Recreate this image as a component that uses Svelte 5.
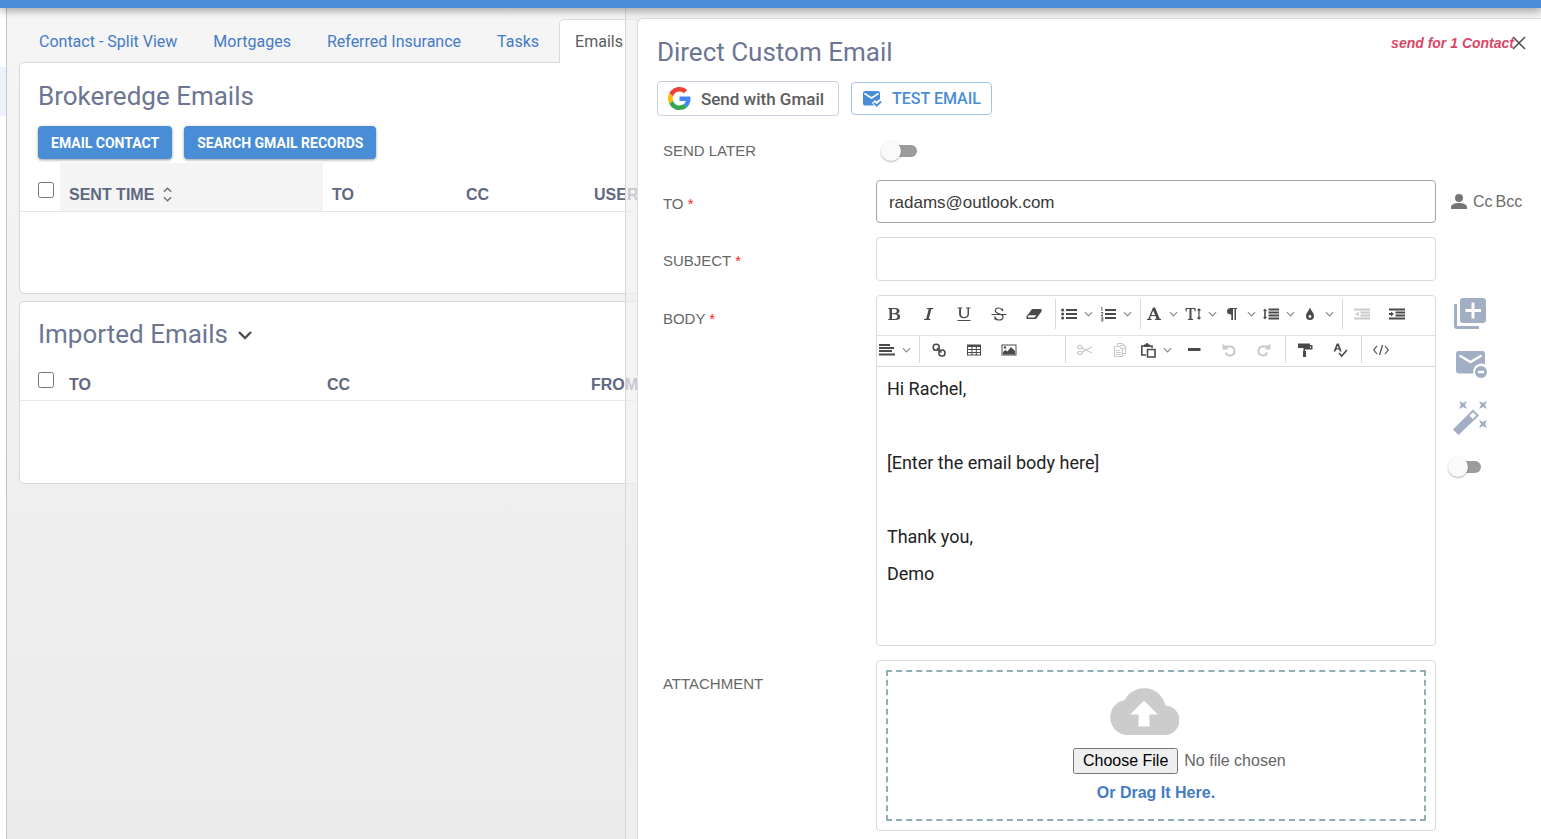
<script lang="ts">
	interface Tool {
		name: string;
		icon: string;
		split?: boolean;
		disabled?: boolean;
	}

	let tabs = ['Contact - Split View', 'Mortgages', 'Referred Insurance', 'Tasks', 'Emails'];
	let activeTab = $state('Emails');

	let sendLater = $state(false);
	let useTemplate = $state(false);
	let to = $state('radams@outlook.com');
	let subject = $state('');

	// toolbar rows, each one split into groups
	const toolbar: Tool[][][] = [
		[
			[
				{ name: 'Bold', icon: 'bold' },
				{ name: 'Italic', icon: 'italic' },
				{ name: 'Underline', icon: 'underline' },
				{ name: 'Strikethrough', icon: 'strike' },
				{ name: 'Clear formatting', icon: 'eraser' }
			],
			[
				{ name: 'Bulleted list', icon: 'ul', split: true },
				{ name: 'Numbered list', icon: 'ol', split: true }
			],
			[
				{ name: 'Font', icon: 'font', split: true },
				{ name: 'Font size', icon: 'size', split: true },
				{ name: 'Paragraph', icon: 'paragraph', split: true },
				{ name: 'Line height', icon: 'lineheight', split: true },
				{ name: 'Color', icon: 'drop', split: true }
			],
			[
				{ name: 'Outdent', icon: 'outdent', disabled: true },
				{ name: 'Indent', icon: 'indent' }
			]
		],
		[
			[{ name: 'Align', icon: 'align', split: true }],
			[
				{ name: 'Link', icon: 'link' },
				{ name: 'Table', icon: 'table' },
				{ name: 'Image', icon: 'image' }
			],
			[
				{ name: 'Cut', icon: 'cut', disabled: true },
				{ name: 'Copy', icon: 'copy', disabled: true },
				{ name: 'Paste', icon: 'paste', split: true },
				{ name: 'Horizontal line', icon: 'hr' },
				{ name: 'Undo', icon: 'undo', disabled: true },
				{ name: 'Redo', icon: 'redo', disabled: true }
			],
			[
				{ name: 'Format painter', icon: 'painter' },
				{ name: 'Spell check', icon: 'spell' }
			],
			[{ name: 'Source', icon: 'source' }]
		]
	];
</script>

{#snippet icon(name: string)}
	<svg class="tool-icon" viewBox="0 0 16 16" aria-hidden="true">
		{#if name === 'bold'}
			<path fill-rule="evenodd" d="M2 2h7c3 0 4.500 1 4.500 3 0 1.500-1 2.400-2.500 2.700 2 .3 3.200 1.400 3.200 3.100 0 2.200-1.700 3.200-4.700 3.200H2v-.8l1.500-.3V3.100L2 2.800zm4 1v4.200h2.200c1.800 0 2.600-.7 2.600-2.100S10 3 8.300 3zm0 5.200V13h2.600c1.900 0 2.800-.8 2.800-2.400s-1-2.400-3-2.400z" />
		{:else if name === 'italic'}
			<path d="M6 2h6.500l-.2.9-2 .3L7.800 12.800l1.700.3-.2.900H3l.2-.9 2-.3L7.700 3.200 5.800 2.900z" />
		{:else if name === 'underline'}
			<path d="M1.500 1.500h5v.8L5 2.600V8c0 2 1 3 3.200 3s3.300-1 3.300-3V2.600L9.900 2.300v-.8h4.600v.8l-1.500.3V8c0 2.700-1.700 4.200-5 4.200S3.100 10.700 3.100 8V2.600L1.500 2.300zM1.500 14h13v1h-13z" />
		{:else if name === 'strike'}
			<path d="M.5 8h15v1H.5z" />
			<path class="line" d="M11.500 5V2.500M11.300 4.500C10.500 2.700 9.500 2 7.800 2 5.500 2 4.300 3 4.300 4.700c0 3.600 7.700 2.400 7.700 6 0 2-1.500 3.300-4 3.300-2 0-3.300-.8-4-2.800m0-1v3.500" />
		{:else if name === 'eraser'}
			<path fill-rule="evenodd" d="M6 3h9.500v2.500L10 13H.5v-2.500zM2 10.500v1h6.500l1.800-2.300H3z" />
		{:else if name === 'ul'}
			<path d="M5 3h11v2H5zM5 7h11v2H5zM5 11h11v2H5z" /><circle cx="1.600" cy="4" r="1.500" /><circle cx="1.600" cy="8" r="1.500" /><circle cx="1.600" cy="12" r="1.500" />
		{:else if name === 'ol'}
			<path d="M5 3h11v2H5zM5 7h11v2H5zM5 11h11v2H5z" /><path class="thin" d="M1 1.500h1V5M.8 6.500h2v1.500L1 9.500h2M.8 11h2v4h-2m0-2h2" />
		{:else if name === 'font'}
			<path fill-rule="evenodd" d="M7 1.500h2l4.700 11.200 1.300.3v1H9v-1l1.500-.3-1-2.700H5l-1 2.700 1.600.3v1H1v-1l1.400-.3zM7.200 4.500L5.400 9h3.700z" />
		{:else if name === 'size'}
			<path d="M.5 2h10v3.500h-.8L9 3H6.500v9.800l1.500.3v.9H3v-.9l1.500-.3V3H2l-.7 2.500H.5z" /><path class="line" d="M14 3v10M12.500 4.500L14 3l1.500 1.500m-3 7L14 13l1.500-1.500" />
		{:else if name === 'paragraph'}
			<path d="M7 2h6v1h-1v11h-1.500V3H9v11H7.300V8.500C4.500 8.500 3 7.400 3 5.300S4.500 2 7 2z" />
		{:else if name === 'lineheight'}
			<path d="M5.500 2.500H16v2H5.500zM5.500 5.500H16v2H5.500zM5.500 8.500H16v2H5.500zM5.500 11.500H16v2H5.500zM2 2.500l2 2.500H2.800v6H4l-2 2.500L0 11h1.200V5H0z" />
		{:else if name === 'drop'}
			<path fill-rule="evenodd" d="M8 1.500c1 3 4 5.300 4 8.500a4 4 0 0 1-8 0c0-3.200 3-5.500 4-8.500zM8 9a1.400 1.400 0 1 0 1.400 1.400C9.400 9.600 8.700 9.500 8 9z" />
		{:else if name === 'outdent' || name === 'indent'}
			<path d="M0 2.500h16v2H0zM6.500 5.500H16v2H6.500zM6.500 8.500H16v2H6.500zM0 11.500h16v2H0z" />
			{#if name === 'indent'}<path d="M0 7h2V5.700L5 8l-3 2.300V9H0z" />{:else}<path d="M4.800 5.700v4.600L1 8z" />{/if}
		{:else if name === 'align'}
			<path d="M0 2h11v2H0zM0 5h15v2H0zM0 8h13v2H0zM0 11.500h16v2H0z" />
		{:else if name === 'link'}
			<g class="bold-line"><rect x="2.200" y="2.200" width="6" height="6" rx="2.800" /><rect x="8" y="8" width="6" height="6" rx="2.800" /><path d="M6 6l4.500 4.500" /></g>
		{:else if name === 'table'}
			<path fill-rule="evenodd" d="M1 2.500h14v11H1zM2 5v2h3.500V5zm4.500 0v2h3.300V5zm4.300 0v2H14V5zM2 8v2h3.500V8zm4.500 0v2h3.300V8zm4.300 0v2H14V8zM2 11v1.500h3.500V11zm4.500 0v1.500h3.300V11zm4.300 0v1.500H14V11z" />
		{:else if name === 'image'}
			<path fill-rule="evenodd" d="M.5 2.500h15v11H.5zm1 1v9h13v-9z" /><path d="M2 12.500V10l2.500-2 2 1.500L10 5l4 4v3.500z" /><circle cx="4" cy="5.500" r="1.200" />
		{:else if name === 'cut'}
			<path class="line" d="M5 6l10 5M5 10l10-5" /><ellipse class="line" cx="3" cy="5" rx="2.200" ry="1.600" /><ellipse class="line" cx="3" cy="11" rx="2.200" ry="1.600" />
		{:else if name === 'copy'}
			<path class="line" d="M5.500 4.500v-3h5l3 3v7h-3M2.500 4.500h5l3 3v7h-8zM4 8.500h4m-4 2h5m-5 2h5M8 3.500h3.500m-1 3h2" />
		{:else if name === 'paste'}
			<path class="bold-line" d="M6 13H1.800V4H12v2M7.500 7.500H15V15H7.500z" /><path d="M4 5V2.500h1.500a1.500 1.500 0 0 1 3 0H10V5z" />
		{:else if name === 'hr'}
			<path d="M2 6h12.500v3H2z" />
		{:else if name === 'undo'}
			<path class="arrow" d="M3.500 4.500H9a4.500 4.500 0 1 1-4.300 6" /><path d="M1.500 1.500v6h6z" />
		{:else if name === 'redo'}
			<path class="arrow" d="M12.500 4.500H7a4.500 4.500 0 1 0 4.300 6" /><path d="M14.500 1.500v6h-6z" />
		{:else if name === 'painter'}
			<path d="M1 1.500h12V3h2.500v4.500H8V9h1v6H6V9h.5V6H14V4.500h-1V6H1z" />
		{:else if name === 'spell'}
			<path fill-rule="evenodd" d="M4.700 1.500h2l3 8H7.800L7.200 7.500H4.100L3.500 9.500H1.500zm1 2l-1 2.700h2z" /><path class="bold-line" d="M7 11l2.700 3L15 8" />
		{:else if name === 'source'}
			<path class="line" d="M4 4L.8 8 4 12M12 4l3.200 4L12 12M9.500 3l-3 10" />
		{/if}
	</svg>
{/snippet}

{#snippet chevron()}
	<svg class="chevron" viewBox="0 0 10 6" aria-hidden="true"><path d="M1 1l4 4 4-4" /></svg>
{/snippet}

<div class="app">
	<header class="topbar"></header>

	<div class="shell">
		<aside class="rail"><div class="rail-active"></div></aside>

		<main>
			<nav class="tabs">
				{#each tabs as tab}
					<a href="#{tab}" class:active={tab === activeTab} onclick={() => (activeTab = tab)}>{tab}</a>
				{/each}
			</nav>

			<section class="card first">
				<h2>Brokeredge Emails</h2>
				<div class="actions">
					<button class="primary">EMAIL CONTACT</button>
					<button class="primary">SEARCH GMAIL RECORDS</button>
				</div>
				<table class="sent">
					<thead>
						<tr>
							<th class="check"><input type="checkbox" aria-label="Select all sent emails" /></th>
							<th class="time sorted">
								SENT TIME
								<svg class="sort" viewBox="0 0 10 16" aria-hidden="true"><path d="M1 5l4-4 4 4M1 11l4 4 4-4" /></svg>
							</th>
							<th class="to">TO</th>
							<th class="cc">CC</th>
							<th>USER</th>
						</tr>
					</thead>
				</table>
			</section>

			<section class="card second">
				<h2>
					Imported Emails
					<svg class="expand" viewBox="0 0 14 10" aria-hidden="true"><path d="M1 2l6 6 6-6" /></svg>
				</h2>
				<table class="imported">
					<thead>
						<tr>
							<th class="check"><input type="checkbox" aria-label="Select all imported emails" /></th>
							<th class="recipient">TO</th>
							<th class="copied">CC</th>
							<th>FROM</th>
						</tr>
					</thead>
				</table>
			</section>
		</main>
	</div>

	<div class="drawer">
		<div class="panel">
			<div class="panel-head">
				<h2>Direct Custom Email</h2>
				<span class="notice">send for 1 Contact</span>
				<button class="close" aria-label="Close">
					<svg viewBox="0 0 14 14" aria-hidden="true"><path d="M1 1l12 12M13 1L1 13" /></svg>
				</button>
			</div>

			<div class="send-buttons">
				<button class="gmail">
					<svg viewBox="0 0 48 48" aria-hidden="true">
						<path fill="#ea4335" d="M24 9.500c3.540 0 6.710 1.220 9.210 3.600l6.850-6.850C35.900 2.380 30.470 0 24 0 14.620 0 6.510 5.380 2.560 13.220l7.980 6.190C12.430 13.720 17.740 9.500 24 9.500z" />
						<path fill="#4285f4" d="M46.980 24.550c0-1.570-.15-3.090-.38-4.550H24v9.020h12.940c-.58 2.960-2.260 5.480-4.780 7.180l7.730 6c4.510-4.180 7.090-10.360 7.090-17.650z" />
						<path fill="#fbbc05" d="M10.530 28.590c-.48-1.450-.76-2.990-.76-4.590s.27-3.140.76-4.590l-7.980-6.190C.92 16.460 0 20.120 0 24c0 3.880.92 7.540 2.560 10.780l7.970-6.190z" />
						<path fill="#34a853" d="M24 48c6.480 0 11.930-2.130 15.890-5.810l-7.730-6c-2.150 1.450-4.920 2.300-8.160 2.300-6.260 0-11.570-4.220-13.470-9.910l-7.980 6.190C6.510 42.620 14.620 48 24 48z" />
					</svg>
					Send with Gmail
				</button>
				<button class="test">
					<svg viewBox="0 0 20 18" aria-hidden="true">
						<path d="M3 1h13a2 2 0 0 1 2 2v6l-3.500 2.500L13 10l-3 3 2 2.500H3a2 2 0 0 1-2-2V3a2 2 0 0 1 2-2z" />
						<path class="cut-line" d="M2.500 3.500l7 4.500 7-4.500" />
						<path class="tick" d="M12 13l2.700 2.700L19 11.500" />
					</svg>
					TEST EMAIL
				</button>
			</div>

			<form class="form" onsubmit={(e) => e.preventDefault()}>
				<label for="send-later">SEND LATER</label>
				<div class="later"><input id="send-later" class="switch" type="checkbox" bind:checked={sendLater} /></div>
				<div></div>

				<label for="to">TO <b>*</b></label>
				<input id="to" class="field filled" type="text" bind:value={to} />
				<div class="copies">
					<svg viewBox="0 0 16 16" aria-hidden="true"><circle cx="8" cy="4" r="4" /><path d="M0 15v-2c0-2.500 4-4 8-4s8 1.500 8 4v2z" /></svg>
					<a href="#cc">Cc</a>
					<a href="#bcc">Bcc</a>
				</div>

				<label for="subject">SUBJECT <b>*</b></label>
				<input id="subject" class="field subject" type="text" bind:value={subject} />
				<div></div>

				<span class="label" id="body-label">BODY <b>*</b></span>
				<div class="editor">
					{#each toolbar as row}
						<div class="tool-row" role="toolbar">
							{#each row as group}
								<div class="tool-group" class:has-split={group[0].split} class:insert={group[0].icon === 'link'}>
									{#each group as tool}
										<button type="button" class="tool" class:split={tool.split} disabled={tool.disabled} aria-label={tool.name}>
											{@render icon(tool.icon)}
											{#if tool.split}{@render chevron()}{/if}
										</button>
									{/each}
								</div>
							{/each}
						</div>
					{/each}
					<div class="body" contenteditable="true" role="textbox" tabindex="0" aria-multiline="true" aria-labelledby="body-label">
						<p>Hi Rachel,</p>
						<p><br /></p>
						<p>[Enter the email body here]</p>
						<p><br /></p>
						<p>Thank you,</p>
						<p>Demo</p>
					</div>
				</div>
				<div class="side-tools">
					<button type="button" aria-label="Add template">
						<svg viewBox="0 0 34 34" aria-hidden="true">
							<path fill-rule="evenodd" d="M10 1h20a3 3 0 0 1 3 3v19a3 3 0 0 1-3 3H10a3 3 0 0 1-3-3V4a3 3 0 0 1 3-3zm8.500 4.500v6.500h-6v3h6v6.500h3V15h6.500v-3h-6.500V5.500z" />
							<path d="M1 7h3v22h22v3H4a3 3 0 0 1-3-3z" />
						</svg>
					</button>
					<button type="button" aria-label="Remove template">
						<svg viewBox="0 2 34 34" aria-hidden="true">
							<path d="M6 4h23a3 3 0 0 1 3 3v10.500a8 8 0 0 0-11.500 9H6a3 3 0 0 1-3-3V7a3 3 0 0 1 3-3z" />
							<path class="flap" d="M6.500 8.500l11 6.500 11-6.500" />
							<circle cx="28" cy="25" r="6" /><path class="flap" d="M25 25h6" />
						</svg>
					</button>
					<button type="button" aria-label="Magic wand">
						<svg viewBox="0 0 34 34" aria-hidden="true">
							<path fill-rule="evenodd" d="M20 8.500l6 6L5.500 34 0 28.500zm0 2.700l-3.600 3.500 3.200 3.200 3.700-3.500z" />
							<path d="M6 0l4 2 4-2-2 4 2 4-4-2-4 2 2-4zM26 0l4 2 4-2-2 4 2 4-4-2-4 2 2-4zM26 19l4 2 4-2-2 4 2 4-4-2-4 2 2-4z" />
						</svg>
					</button>
					<input class="switch" type="checkbox" aria-label="Use template" bind:checked={useTemplate} />
				</div>

				<label for="attachment">ATTACHMENT</label>
				<div class="attachment">
					<div class="dropzone">
						<svg viewBox="0 0 70 48" aria-hidden="true">
							<path fill-rule="evenodd" d="M56.500 18.500A22 22 0 0 0 15.500 13 17.700 17.700 0 0 0 17.500 48H55a14.700 14.700 0 0 0 1.500-29.500zM40.500 27.500v12h-11v-12H21l14-14 14 14z" />
						</svg>
						<input id="attachment" type="file" />
						<strong>Or Drag It Here.</strong>
					</div>
				</div>
				<div></div>
			</form>
		</div>
	</div>
</div>

<style>
	:global(body) {
		margin: 0;
		overflow: hidden;
	}

	.app {
		position: relative;
		height: 100vh;
		overflow: hidden;
		display: flex;
		flex-direction: column;
		font-family: Roboto, sans-serif;
		font-size: 16px;
		color: #5b5b5b;
		background: linear-gradient(#f5f5f5, #ebebeb);
	}

	.app *,
	.app *::before {
		box-sizing: border-box;
	}

	button {
		font-family: inherit;
		cursor: pointer;
	}

	.topbar {
		position: relative;
		z-index: 3;
		height: 8px;
		flex: none;
		background: #488dd6;
		box-shadow: 0 2px 8px rgba(0, 0, 0, 0.4);
	}

	.shell {
		flex: 1;
		display: flex;
		min-height: 0;
	}

	.rail {
		width: 7px;
		flex: none;
		padding-top: 59px;
		background: #fff;
		border-right: 1px solid #c6c6c6;
	}

	.rail-active {
		height: 49px;
		background: #ecf2fb;
	}

	main {
		flex: 1;
		min-width: 0;
		padding: 11px 0 0 12px;
	}

	h2 {
		margin: 0;
		font-size: 26px;
		line-height: 32px;
		font-weight: 400;
		color: #6c7693;
	}

	.tabs {
		display: flex;
		gap: 4px;
		padding-left: 4px;
	}

	.tabs a {
		height: 44px;
		padding: 0 15px;
		line-height: 44px;
		color: #447bc4;
		text-decoration: none;
		border: 1px solid transparent;
		border-bottom: 0;
		white-space: nowrap;
	}

	.tabs a.active {
		position: relative;
		color: #5b5b5b;
		background: #fff;
		border-color: #dadada;
		border-radius: 5px 5px 0 0;
	}

	.card {
		background: #fff;
		border: 1px solid #d8d8d8;
		border-radius: 5px;
	}

	.card h2 {
		padding: 16px 18px 0;
	}

	.first {
		margin-top: -1px;
		min-height: 232px;
	}

	.first h2 {
		padding-top: 17px;
	}

	.second {
		margin-top: 7px;
		min-height: 183px;
	}

	.actions {
		display: flex;
		gap: 12px;
		padding: 14px 18px 4px;
	}

	.primary {
		height: 33px;
		padding: 0 13px;
		font-size: 14px;
		font-weight: 700;
		color: #fff;
		background: #488dd6;
		border: 0;
		border-radius: 4px;
		box-shadow: 0 1px 3px rgba(0, 0, 0, 0.4);
	}

	table {
		width: 100%;
		table-layout: fixed;
		border-collapse: collapse;
	}

	th {
		height: 48px;
		padding: 16px 9px 0;
		font-family: 'Liberation Sans', Arial, sans-serif;
		font-size: 16px;
		line-height: 20px;
		text-align: left;
		color: #5f6882;
		border-bottom: 1px solid #e5e5ee;
	}

	th.check {
		width: 40px;
		padding: 6px 0 0 18px;
	}

	th input {
		display: block;
		width: 16px;
		height: 16px;
		margin: 0;
	}

	th.time {
		width: 263px;
	}

	th.to {
		width: 134px;
	}

	th.cc {
		width: 128px;
	}

	th.recipient {
		width: 258px;
	}

	th.copied {
		width: 264px;
	}

	th.sorted {
		background: #f4f4f4;
	}

	.imported th {
		height: 50px;
		padding-top: 20px;
	}

	.imported th.check {
		padding-top: 10px;
	}

	.sort {
		width: 9px;
		height: 15px;
		margin-left: 4px;
		vertical-align: -2px;
	}

	.expand {
		width: 14px;
		height: 10px;
		margin-left: 4px;
		vertical-align: 3px;
	}

	.sort path,
	.expand path,
	.close path,
	.chevron path {
		fill: none;
		stroke: #6b6f7b;
		stroke-width: 1.5;
	}

	.expand path {
		stroke: #505050;
		stroke-width: 2.4;
	}

	.drawer {
		position: absolute;
		z-index: 2;
		top: 8px;
		right: 0;
		bottom: 0;
		width: 59.45%;
		padding: 10px 0 0 11px;
		background: rgba(238, 238, 238, 0.72);
		border-left: 1px solid #d6d6d6;
	}

	.panel {
		min-height: 100%;
		padding: 0 0 8px 19px;
		background: #fff;
		border: 1px solid #dcdcdc;
		border-right: 0;
		border-radius: 6px 0 0 0;
	}

	.panel-head {
		display: flex;
		align-items: flex-start;
		padding: 17px 15px 13px 0;
	}

	.panel-head h2 {
		flex: 1;
	}

	.notice {
		font: italic 700 14px/14px 'Liberation Sans', Arial, sans-serif;
		color: #d94767;
	}

	.close {
		margin-left: -2px;
		padding: 0;
		border: 0;
		background: none;
	}

	.close svg {
		display: block;
		width: 14px;
		height: 14px;
	}

	.close path {
		stroke: #4a4a4a;
	}

	.send-buttons {
		display: flex;
		align-items: center;
		gap: 12px;
	}

	.send-buttons button {
		display: flex;
		align-items: center;
		gap: 10px;
		background: #fff;
		border-radius: 4px;
		font-weight: 500;
	}

	.gmail {
		height: 35px;
		padding: 0 14px 0 10px;
		font-size: 17px;
		color: #5b5b5b;
		border: 1px solid #c9cede;
	}

	.gmail svg {
		width: 23px;
		height: 23px;
	}

	.test {
		height: 33px;
		padding: 0 10px;
		font-size: 16px;
		color: #488dd6;
		border: 1px solid #9fc4ec;
	}

	.test svg {
		width: 20px;
		height: 18px;
		fill: #488dd6;
	}

	.test .cut-line,
	.test .tick {
		fill: none;
		stroke: #fff;
		stroke-width: 1.6;
	}

	.test .tick {
		stroke: #488dd6;
		stroke-width: 2;
	}

	.form {
		display: grid;
		grid-template-columns: 213px 1fr 105px;
		row-gap: 14px;
		padding: 19px 0 0 6px;
	}

	label,
	.label {
		padding-top: 15px;
		font-family: 'Liberation Sans', Arial, sans-serif;
		font-size: 15px;
		line-height: 18px;
		color: #676767;
	}

	label:first-child {
		padding-top: 7px;
	}

	label b,
	.label b {
		font-weight: 400;
		color: #f22;
	}

	.later {
		padding: 7px 0 6px 5px;
	}

	.switch {
		position: relative;
		display: block;
		width: 36px;
		height: 18px;
		margin: 0;
		appearance: none;
		cursor: pointer;
	}

	.switch::before {
		content: '';
		position: absolute;
		inset: 3px 0 3px 4px;
		border-radius: 6px;
		background: #9c9c9c;
	}

	.switch::after {
		content: '';
		position: absolute;
		left: 0;
		top: -1px;
		width: 20px;
		height: 20px;
		border-radius: 50%;
		background: #fafafa;
		box-shadow: 0 1px 2px rgba(0, 0, 0, 0.3);
	}

	.switch:checked::after {
		left: 16px;
	}

	.field {
		width: 100%;
		height: 43px;
		padding: 2px 12px 0;
		font-family: 'Liberation Sans', Arial, sans-serif;
		font-size: 17px;
		color: #3a3a3a;
		background: #fff;
		border: 1px solid #d9d9d9;
		border-radius: 4px;
	}

	.field.filled {
		border-color: #a4a4a4;
	}

	.field.subject {
		height: 44px;
	}

	.copies {
		display: flex;
		align-items: center;
		padding-left: 15px;
		font-family: 'Liberation Sans', Arial, sans-serif;
	}

	.copies svg {
		width: 16px;
		height: 16px;
		margin-right: 6px;
		fill: #757575;
	}

	.copies a {
		margin-right: 3px;
		color: #6b6b6b;
		text-decoration: none;
	}

	.editor {
		border: 1px solid #d9d9d9;
		border-radius: 4px;
	}

	.tool-row {
		display: flex;
		height: 40px;
		padding: 3px 0 6px;
		border-bottom: 1px solid #e2e2e2;
	}

	.tool-row + .tool-row {
		height: 31px;
		padding: 0 0 3px;
		border-color: #d9d9d9;
	}

	.tool-group {
		display: flex;
		padding: 0 3px 0 2px;
		border-right: 1px solid #d9d9d9;
	}

	.tool-group:first-child {
		padding-left: 0;
	}

	.tool-group.has-split:not(:first-child) {
		padding-left: 3px;
	}

	.tool-group:last-child {
		border-right: 0;
	}

	.tool-group.insert {
		padding-right: 38px;
	}

	.tool {
		display: flex;
		align-items: center;
		justify-content: center;
		width: 35px;
		padding: 0;
		border: 0;
		background: none;
		color: #4a4a4a;
	}

	.tool:disabled {
		color: #c9c9c9;
	}

	.tool.split {
		gap: 7px;
		width: 39px;
		padding-right: 2px;
	}

	.tool-icon {
		width: 16px;
		height: 16px;
		flex: none;
		fill: currentColor;
	}

	.line,
	.thin,
	.bold-line,
	.arrow {
		fill: none;
		stroke: currentColor;
		stroke-width: 1.2;
	}

	.thin {
		stroke-width: 0.8;
	}

	.bold-line {
		stroke-width: 1.6;
	}

	.arrow {
		stroke-width: 2;
	}

	.chevron {
		width: 9px;
		height: 6px;
		flex: none;
	}

	.chevron path {
		stroke: #8a8a8a;
		stroke-width: 1.3;
	}

	.body {
		min-height: 278px;
		padding: 3px 10px;
		font-size: 18px;
		color: #222;
	}

	.body p {
		margin: 0;
		line-height: 37px;
	}

	.side-tools {
		display: flex;
		flex-direction: column;
		align-items: flex-start;
		gap: 18px;
		padding: 2px 0 0 12px;
	}

	.side-tools button {
		margin-left: 5px;
		padding: 0;
		border: 0;
		background: none;
	}

	.side-tools svg {
		display: block;
		width: 34px;
		height: 34px;
		fill: #a1aec4;
	}

	.side-tools .flap {
		fill: none;
		stroke: #fff;
		stroke-width: 2.4;
	}

	.side-tools .switch {
		width: 33px;
		margin-top: 5px;
	}

	.attachment {
		padding: 9px;
		border: 1px solid #d9d9d9;
		border-radius: 4px;
	}

	.dropzone {
		display: flex;
		flex-direction: column;
		align-items: center;
		height: 151px;
		padding-top: 15px;
		border: 2px dashed #90afb5;
		font-family: 'Liberation Sans', Arial, sans-serif;
	}

	.dropzone svg {
		width: 70px;
		height: 48px;
		margin-right: 24px;
		fill: #ccc;
	}

	.dropzone input {
		width: 240px;
		margin: 13px 0 9px 74px;
		font-family: inherit;
		font-size: 16px;
		color: #666;
	}

	.dropzone input::file-selector-button {
		margin-right: 6px;
		padding: 2px 8px;
		font: inherit;
	}

	.dropzone strong {
		font-size: 16px;
		line-height: 20px;
		color: #447bc4;
	}
</style>
